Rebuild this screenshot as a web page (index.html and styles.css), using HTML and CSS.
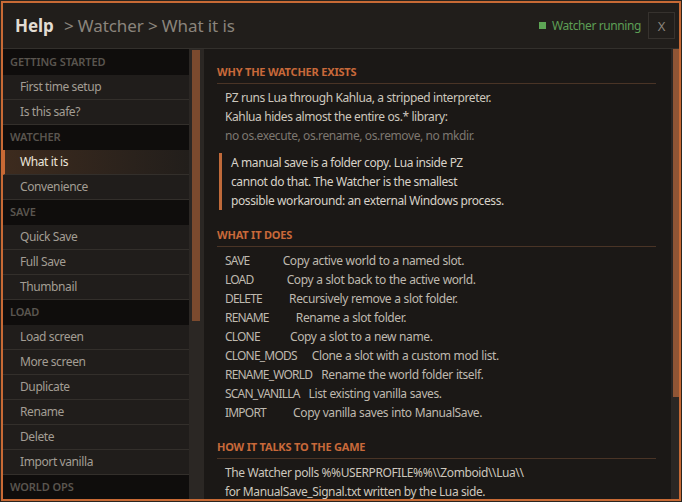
FILE: index.html
```html
<!DOCTYPE html>
<html lang="en">
<head>
    <meta charset="UTF-8">
    <meta name="viewport" content="width=device-width, initial-scale=1.0">
    <title>Help - Watcher</title>
    <link rel="stylesheet" href="styles.css">
</head>
<body>
    <div class="window">
        <div class="titlebar">
            <div class="crumbs">
                <span class="title">Help</span>
                <span class="path">&gt; Watcher &gt; What it is</span>
            </div>
            <div class="status"><span class="dot"></span>Watcher running</div>
            <button class="close">X</button>
        </div>
        <div class="panes">
            <ul class="sidebar">
                <li class="group">Getting started</li>
                <li class="item">First time setup</li>
                <li class="item">Is this safe?</li>
                <li class="group">Watcher</li>
                <li class="item active">What it is</li>
                <li class="item">Convenience</li>
                <li class="group">Save</li>
                <li class="item">Quick Save</li>
                <li class="item">Full Save</li>
                <li class="item">Thumbnail</li>
                <li class="group">Load</li>
                <li class="item">Load screen</li>
                <li class="item">More screen</li>
                <li class="item">Duplicate</li>
                <li class="item">Rename</li>
                <li class="item">Delete</li>
                <li class="item">Import vanilla</li>
                <li class="group">World ops</li>
            </ul>
            <div class="scrollbar side"><div class="thumb"></div></div>

            <div class="content">
                <h2>Why the Watcher exists</h2>
                <p>PZ runs Lua through Kahlua, a stripped interpreter.</p>
                <p>Kahlua hides almost the entire os.* library:</p>
                <p class="muted">no os.execute, os.rename, os.remove, no mkdir.</p>
                <blockquote>
                    <p>A manual save is a folder copy. Lua inside PZ</p>
                    <p>cannot do that. The Watcher is the smallest</p>
                    <p>possible workaround: an external Windows process.</p>
                </blockquote>

                <h2>What it does</h2>
                <div id="commands"></div>

                <h2>How it talks to the game</h2>
                <p>The Watcher polls %%USERPROFILE%%\\Zomboid\\Lua\\</p>
                <p>for ManualSave_Signal.txt written by the Lua side.</p>
            </div>
            <div class="scrollbar main"><div class="thumb"></div></div>
        </div>
    </div>
    <script>
        const commands = [
            ['SAVE', 'Copy active world to a named slot.'],
            ['LOAD', 'Copy a slot back to the active world.'],
            ['DELETE', 'Recursively remove a slot folder.'],
            ['RENAME', 'Rename a slot folder.'],
            ['CLONE', 'Copy a slot to a new name.'],
            ['CLONE_MODS', 'Clone a slot with a custom mod list.'],
            ['RENAME_WORLD', 'Rename the world folder itself.'],
            ['SCAN_VANILLA', 'List existing vanilla saves.'],
            ['IMPORT', 'Copy vanilla saves into ManualSave.']
        ];

        // names are padded with spaces, same as the watcher's own help output
        const list = document.getElementById('commands');
        commands.forEach(cmd => {
            const row = document.createElement('p');
            row.className = 'cmd';
            const name = document.createElement('span');
            name.className = 'cmd-name';
            name.textContent = cmd[0];
            row.appendChild(name);
            row.appendChild(document.createTextNode(' '.repeat(15 - cmd[0].length) + cmd[1]));
            list.appendChild(row);
        });
    </script>
</body>
</html>
```

FILE: styles.css
```css
* {
    box-sizing: border-box;
}
body {
    margin: 0;
    background-color: #2a2520;
    font-family: "Noto Sans", "Open Sans", sans-serif;
    letter-spacing: -0.4px;
}
.window {
    margin: 1px;
    width: 680px;
    height: 500px;
    border: 2px solid #c86a35;
    background-color: #1b1816;
    overflow: hidden;
}
.titlebar {
    display: flex;
    align-items: center;
    height: 46px;
    padding: 0 4px 0 12px;
    background-color: #211e1b;
    border-bottom: 1px solid #33302c;
}
.crumbs {
    flex: 1;
    font-size: 17px;
    letter-spacing: -0.1px;
}
.crumbs .title {
    color: #e2dcd3;
    font-weight: bold;
    margin-right: 6px;
}
.crumbs .path {
    color: #8a847c;
}
.status {
    display: flex;
    align-items: center;
    color: #5d9e55;
    font-size: 12px;
    margin-right: 7px;
}
.status .dot {
    width: 7px;
    height: 7px;
    background-color: #5da555;
    margin-right: 6px;
}
.close {
    width: 27px;
    height: 27px;
    background: transparent;
    border: 1px solid #36322e;
    color: #8a847c;
    font-family: inherit;
    font-size: 13px;
    padding: 0;
}
.panes {
    display: flex;
    height: 450px;
}
.sidebar {
    list-style: none;
    margin: 0;
    padding: 1px 0 0 0;
    width: 186px;
    flex-shrink: 0;
    overflow: hidden;
    background-color: #0f0d0c;
}
.sidebar li {
    height: 25px;
    line-height: 24px;
    white-space: nowrap;
}
.sidebar .group {
    padding-left: 7px;
    background-color: #0f0d0c;
    color: #5a554f;
    font-size: 11px;
    font-weight: 600;
    letter-spacing: -0.1px;
    text-transform: uppercase;
}
.sidebar .item {
    padding-left: 17px;
    background-color: #201d1b;
    border-bottom: 1px solid #332f2b;
    color: #a39d94;
    font-size: 12px;
}
.sidebar .item.active {
    padding-left: 15px;
    border-left: 2px solid #c86a35;
    background: linear-gradient(to right, #3d2b1e, #221e1b);
    color: #ece6dc;
}
.scrollbar {
    flex-shrink: 0;
    background-color: #2b2724;
}
.scrollbar.side {
    width: 15px;
    padding: 1px 4px 0 3px;
}
.scrollbar.side .thumb {
    height: 271px;
    background-color: #7b4a2e;
}
.scrollbar.main {
    width: 8px;
    padding-left: 2px;
}
.scrollbar.main .thumb {
    height: 348px;
    background-color: #8f5535;
}
.content {
    flex: 1;
    overflow: hidden;
    padding: 15px 15px 0 13px;
    background-color: #1b1816;
}
.content h2 {
    margin: 17px 0 4px 0;
    padding-bottom: 4px;
    border-bottom: 1px solid #4a3426;
    color: #c8693a;
    font-size: 11px;
    font-weight: bold;
    letter-spacing: -0.2px;
    line-height: 15px;
    text-transform: uppercase;
}
.content h2:first-child {
    margin-top: 0;
}
.content p {
    margin: 0;
    padding-left: 8px;
    color: #cdc7bd;
    font-size: 12px;
    line-height: 19px;
    white-space: nowrap;
}
.content p.muted {
    color: #7d7770;
}
.content blockquote {
    margin: 8px 0 0 2px;
    padding-left: 7px;
    border-left: 3px solid #c06a3a;
}
.content blockquote p {
    padding-left: 2px;
    color: #d8d2c8;
}
.content p.cmd {
    white-space: pre;
    word-spacing: 0.3px;
    color: #bfb9af;
}
.cmd-name {
    letter-spacing: -0.8px;
}
```
